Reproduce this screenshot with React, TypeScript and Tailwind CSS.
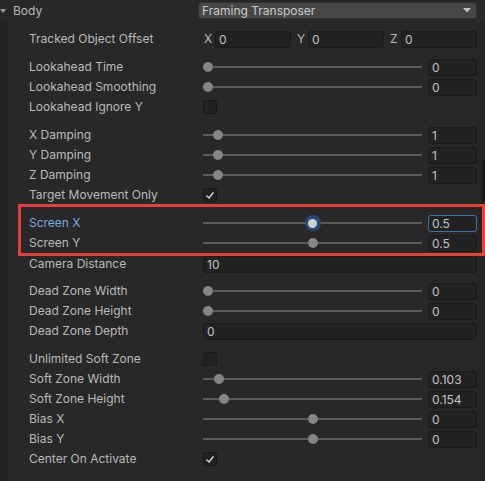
import React from "react";

type Row =
  | { kind: "slider"; label: string; frac: number; value: string; active?: boolean }
  | { kind: "check"; label: string; checked: boolean }
  | { kind: "input"; label: string; value: string }
  | { kind: "vector"; label: string };

const groupA: Row[] = [{ kind: "vector", label: "Tracked Object Offset" }];
const groupB: Row[] = [
  { kind: "slider", label: "Lookahead Time", frac: 0, value: "0" },
  { kind: "slider", label: "Lookahead Smoothing", frac: 0, value: "0" },
  { kind: "check", label: "Lookahead Ignore Y", checked: false },
];
const groupC: Row[] = [
  { kind: "slider", label: "X Damping", frac: 0.05, value: "1" },
  { kind: "slider", label: "Y Damping", frac: 0.05, value: "1" },
  { kind: "slider", label: "Z Damping", frac: 0.05, value: "1" },
  { kind: "check", label: "Target Movement Only", checked: true },
];
const screenRows: Row[] = [
  { kind: "slider", label: "Screen X", frac: 0.5, value: "0.5", active: true },
  { kind: "slider", label: "Screen Y", frac: 0.5, value: "0.5" },
];
const groupD: Row[] = [
  { kind: "slider", label: "Dead Zone Width", frac: 0, value: "0" },
  { kind: "slider", label: "Dead Zone Height", frac: 0, value: "0" },
  { kind: "input", label: "Dead Zone Depth", value: "0" },
];
const groupE: Row[] = [
  { kind: "check", label: "Unlimited Soft Zone", checked: false },
  { kind: "slider", label: "Soft Zone Width", frac: 0.0515, value: "0.103" },
  { kind: "slider", label: "Soft Zone Height", frac: 0.077, value: "0.154" },
  { kind: "slider", label: "Bias X", frac: 0.5, value: "0" },
  { kind: "slider", label: "Bias Y", frac: 0.5, value: "0" },
  { kind: "check", label: "Center On Activate", checked: true },
];

function Field({ value, focused, className = "" }: { value: string; focused?: boolean; className?: string }) {
  return (
    <div
      className={`h-[17px] rounded-[3px] border bg-[#222222] px-[3px] text-[12px] leading-[15px] text-[#c2c2c2] ${
        focused ? "border-[#3a74b4]" : "border-[#1a1a1a]"
      } ${className}`}
    >
      {value}
    </div>
  );
}

function Slider({ frac, value, active }: { frac: number; value: string; active?: boolean }) {
  const center = 5 + frac * 209;
  return (
    <div className="flex h-full items-center gap-[6px]">
      <div className="relative flex h-full w-[219px] items-center">
        <div className="h-[2px] w-full bg-[#5a5a5a]" />
        {active ? (
          <div
            className="absolute top-1/2 flex h-[16px] w-[16px] -translate-y-1/2 items-center justify-center rounded-full bg-[#224a78]"
            style={{ left: center - 8 }}
          >
            <div className="h-[9px] w-[9px] rounded-full bg-[#d0d0d0]" />
          </div>
        ) : (
          <div
            className="absolute top-1/2 h-[10px] w-[10px] -translate-y-1/2 rounded-full bg-[#868686]"
            style={{ left: center - 5 }}
          />
        )}
      </div>
      <Field value={value} focused={active} className="w-[49px]" />
    </div>
  );
}

function Checkbox({ checked }: { checked: boolean }) {
  return (
    <div className="h-[14px] w-[14px] rounded-[2px] border border-[#1a1a1a] bg-[#222222]">
      {checked && (
        <svg width="12" height="12" viewBox="0 0 12 12">
          <polyline points="2.5,6.5 5,9 9.5,3.5" fill="none" stroke="#dcdcdc" strokeWidth="1.4" />
        </svg>
      )}
    </div>
  );
}

function PropRow({ row }: { row: Row }) {
  return (
    <div className="flex h-[20px] items-center">
      <div className={`w-[195px] pl-[21px] ${row.kind === "slider" && row.active ? "text-[#7aa7e4]" : ""}`}>
        {row.label}
      </div>
      <div className="flex h-full flex-1 items-center">
        {row.kind === "slider" && <Slider frac={row.frac} value={row.value} active={row.active} />}
        {row.kind === "check" && <Checkbox checked={row.checked} />}
        {row.kind === "input" && <Field value={row.value} className="flex-1" />}
        {row.kind === "vector" && (
          <div className="flex flex-1 gap-[5px]">
            {["X", "Y", "Z"].map((axis) => (
              <div key={axis} className="flex flex-1 items-center">
                <span className="w-[12px] pl-[1px]">{axis}</span>
                <Field value="0" className="flex-1" />
              </div>
            ))}
          </div>
        )}
      </div>
    </div>
  );
}

export default function App() {
  return (
    <div className="relative h-[481px] w-[485px] overflow-hidden bg-[#282828] font-['Inter','Liberation_Sans',sans-serif] text-[12px] text-[#bababa]">
      {/* Foldout header */}
      <div className="flex h-[22px] items-start">
        <div className="flex h-[22px] w-[198px] items-center">
          <svg width="6" height="6" viewBox="0 0 6 6" className="ml-0 mr-[7px]">
            <polygon points="0,1 6,1 3,5" fill="#9a9a9a" />
          </svg>
          <span>Body</span>
        </div>
        <div className="mt-[2px] flex h-[17px] w-[279px] items-center justify-between rounded-[3px] border border-[#303030] bg-[#474747] pl-[3px] pr-[5px] text-[#cccccc]">
          <span>Framing Transposer</span>
          <svg width="8" height="5" viewBox="0 0 8 5">
            <polygon points="0,0 8,0 4,4.5" fill="#c4c4c4" />
          </svg>
        </div>
      </div>

      <div className="flex">
        <div className="w-[8px] bg-[#242424]" />
        <div className="flex-1 pr-[2px]">
          <div className="h-[7px]" />
          {groupA.map((r) => (
            <PropRow key={r.label} row={r} />
          ))}
          <div className="h-[8px]" />
          {groupB.map((r) => (
            <PropRow key={r.label} row={r} />
          ))}
          <div className="h-[8px]" />
          {groupC.map((r) => (
            <PropRow key={r.label} row={r} />
          ))}
          <div className="relative">
            <div className="h-[8px]" />
            {screenRows.map((r) => (
              <PropRow key={r.label} row={r} />
            ))}
            {/* highlight annotation */}
            <div className="pointer-events-none absolute bottom-[-3px] left-[10px] right-[-8px] top-[-1px] border-[3px] border-[#e5403b]" />
          </div>
          <div className="h-[1px]" />
          <PropRow row={{ kind: "input", label: "Camera Distance", value: "10" }} />
          <div className="h-[7px]" />
          {groupD.map((r) => (
            <PropRow key={r.label} row={r} />
          ))}
          <div className="h-[8px]" />
          {groupE.map((r) => (
            <PropRow key={r.label} row={r} />
          ))}
          <div className="h-[20px]" />
        </div>
        <div className="w-[6px] bg-[#252525]" />
      </div>

      {/* scrollbar sliver */}
      <div className="absolute right-0 top-[160px] h-[42px] w-[3px] bg-[#1b1b1b]" />
    </div>
  );
}
